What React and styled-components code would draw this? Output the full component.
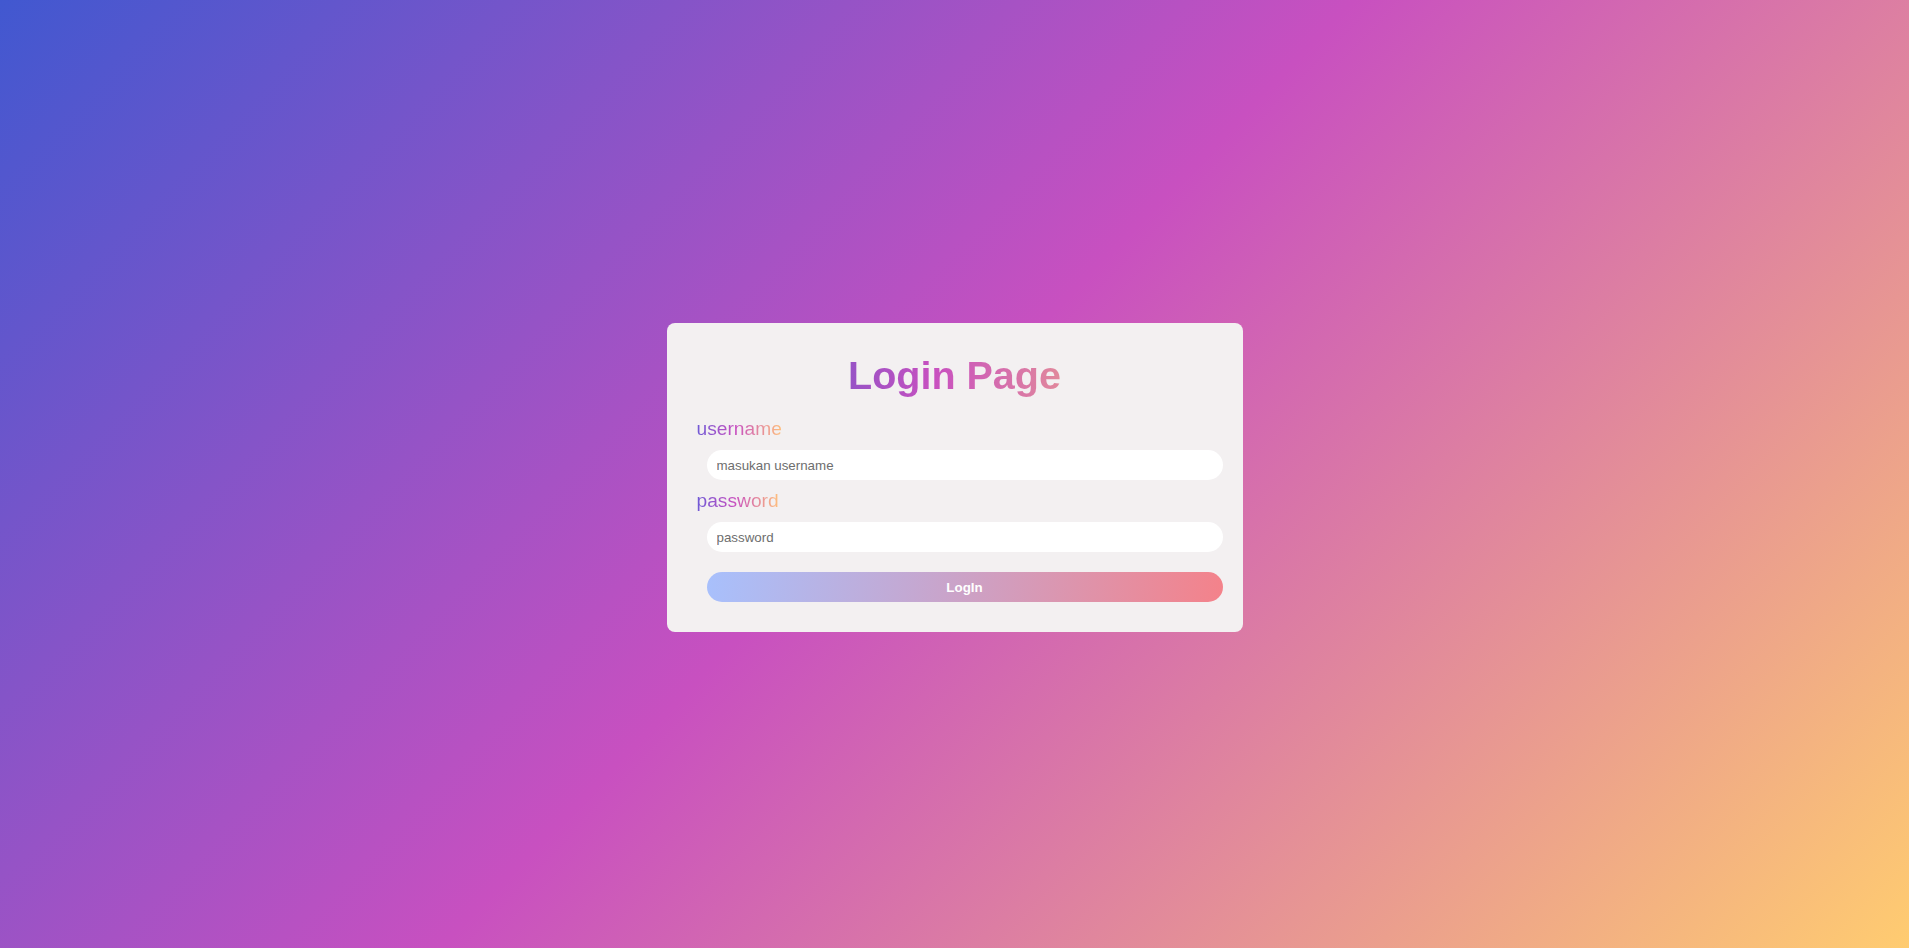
import styled, { createGlobalStyle } from "styled-components";

const GlobalStyle = createGlobalStyle`
  * {
    box-sizing: border-box;
  }
  body {
    margin: 0;
    font-family: "Liberation Sans", Arial, sans-serif;
  }
`;

const titleGradient = "linear-gradient(90deg, #4158d0 0%, #c850c0 46%, #ffcc70 100%)";
const labelGradient = "linear-gradient(90deg, #7059d6 0%, #c850c0 46%, #ffc07c 100%)";

const Page = styled.div`
  min-height: 100vh;
  display: flex;
  align-items: center;
  justify-content: center;
  padding-top: 7px;
  background: linear-gradient(134deg, #4158d0 0%, #c850c0 48%, #ffcc70 100%);
`;

const Card = styled.form`
  width: 576px;
  padding: 29px 30px 30px;
  border-radius: 8px;
  background-color: #f3f0f1;
`;

const Title = styled.h1`
  margin: 0 0 20px;
  font-size: 39.5px;
  font-weight: bold;
  line-height: 46px;
  text-align: center;
  background: ${titleGradient};
  -webkit-background-clip: text;
  background-clip: text;
  color: transparent;
`;

const Label = styled.label`
  display: block;
  width: fit-content;
  font-size: 19.2px;
  background: ${labelGradient};
  -webkit-background-clip: text;
  background-clip: text;
  color: transparent;
`;

const Input = styled.input`
  display: block;
  width: 100%;
  height: 30px;
  margin: 10px;
  padding: 0 10px;
  border: none;
  border-radius: 15px;
  background-color: #fff;
  font-family: "Liberation Sans", Arial, sans-serif;
  font-size: 13.33px;
  outline: none;

  &::placeholder {
    color: #6e6e6e;
  }
`;

const Button = styled.button`
  display: block;
  width: 100%;
  height: 30px;
  margin: 20px 10px 0;
  border: none;
  border-radius: 15px;
  background: linear-gradient(95deg, #a8c0fc 0%, #c4a8d2 40%, #f4828a 100%);
  color: #fff;
  font-family: "Liberation Sans", Arial, sans-serif;
  font-size: 13.33px;
  font-weight: bold;
  cursor: pointer;
`;

const App = () => {
  return (
    <>
      <GlobalStyle />
      <Page>
        <Card onSubmit={(e) => e.preventDefault()}>
          <Title>Login Page</Title>
          <Label htmlFor="username">username</Label>
          <Input id="username" type="text" placeholder="masukan username" />
          <Label htmlFor="password">password</Label>
          <Input id="password" type="password" placeholder="password" />
          <Button type="submit">LogIn</Button>
        </Card>
      </Page>
    </>
  );
};

export default App;
